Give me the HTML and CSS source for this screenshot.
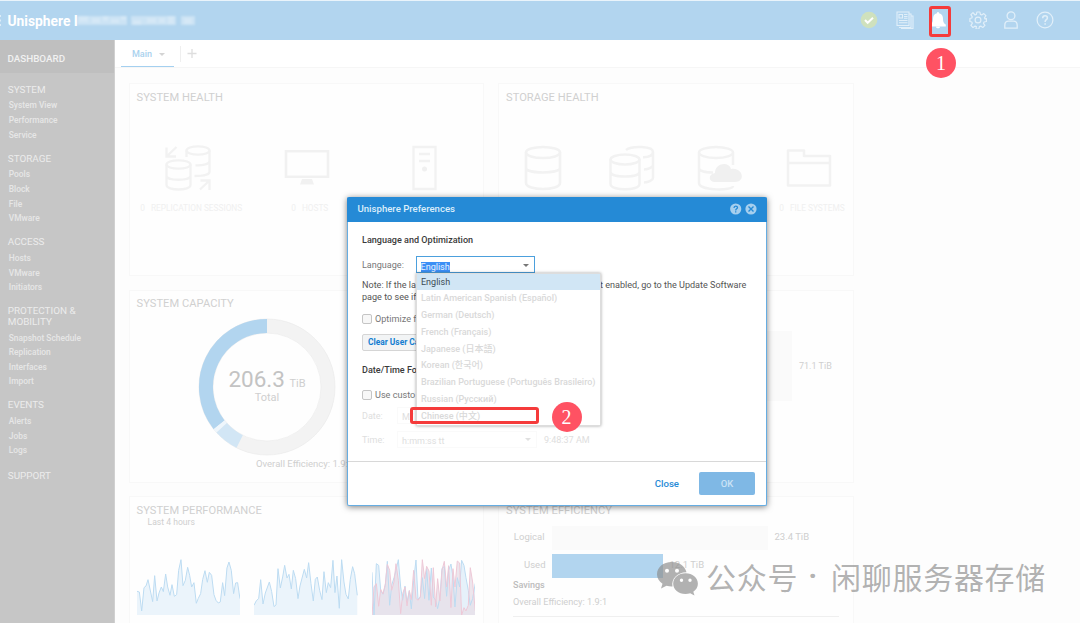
FILE: index.html
```html
<!DOCTYPE html>
<html lang="en">
<head>
<meta charset="utf-8">
<title>Unisphere</title>
<link rel="stylesheet" href="styles.css">
</head>
<body>
<div class="app">
  <header class="topbar">
    <svg class="grip" width="2" height="14" viewBox="0 0 2 14"><path d="M0 2h1M0 6.500h1M0 11h1" stroke="#dcecf8" stroke-width="2"/></svg>
    <h1 class="brand">Unisphere I</h1>
    <svg class="masked" width="118" height="12" viewBox="0 0 118 12" fill="#fff">
      <g opacity=".33"><rect x="0" y="1" width="50" height="9"/><rect x="54" y="1" width="45" height="9"/><rect x="104" y="1" width="14" height="9"/></g>
      <g opacity=".18"><rect x="2" y="1" width="9" height="6"/><rect x="15" y="3" width="8" height="5"/><rect x="26" y="1" width="5" height="5"/><rect x="34" y="4" width="8" height="4"/><rect x="44" y="1" width="5" height="4"/><rect x="56" y="5" width="8" height="5"/><rect x="70" y="3" width="9" height="5"/><rect x="82" y="3" width="6" height="5"/><rect x="91" y="1" width="6" height="8"/><rect x="107" y="3" width="8" height="6"/></g>
    </svg>
    <nav class="tools">
      <svg width="18" height="18" viewBox="0 0 18 18"><circle cx="9" cy="9" r="8.300" fill="#cfe1bd"/><path d="M5 9l2.700 2.800L13 6.800" fill="none" stroke="#fff" stroke-width="2"/></svg>
      <svg width="18" height="18" viewBox="0 0 18 18" fill="none" stroke="#e1eff9" stroke-width="1.100"><path d="M1 1h12v13.500H1zM13 3h2v13.500H3M15 5h2v12.500H5"/><path d="M3 3.500h3.500v3.500H3zM8 3.500h3.500M8 5.500h3.500M8 7.300h3.500M3 9.500h8.500M3 11.700h8.500"/></svg>
      <svg width="18" height="18" viewBox="0 0 18 18" fill="#fff"><path d="M8 2.200C8 .5 10 .5 10 2.200c3 .6 4 3 4 5.500 0 3.500 1 4.800 2.800 5.800v2H1.200v-2C3 12.500 4 11.200 4 7.700c0-2.500 1-4.900 4-5.500zM7 15.800h4c0 2-4 2-4 0z"/></svg>
      <svg width="18" height="18" viewBox="0 0 18 18" fill="none" stroke="#e1eff9" stroke-width="1.200"><path stroke-linejoin="round" d="M7.500 1h3l.5 2.400 1.300.6 2.100-1.400 2.100 2.100-1.400 2.100.5 1.200L17 7.500v3l-2.400.5-.5 1.300 1.400 2.100-2.100 2.100-2.100-1.400-1.300.5-.5 2.400h-3L7 15.600l-1.300-.5-2.100 1.400-2.100-2.100 1.400-2.100-.5-1.300-1.900-.5v-3L2.400 7l.5-1.200-1.400-2.100 2.100-2.100L5.700 4 7 3.400z" transform="translate(.4 0)"/><circle cx="9" cy="9" r="2.900"/></svg>
      <svg width="18" height="18" viewBox="0 0 18 18" fill="none" stroke="#e1eff9" stroke-width="1.300"><circle cx="9" cy="4.800" r="3.900"/><path d="M2.800 17.200v-3c0-2.500 1.500-4 3.800-4h4.800c2.300 0 3.800 1.500 3.800 4v3z"/></svg>
      <svg width="18" height="18" viewBox="0 0 18 18" fill="none" stroke="#e1eff9"><circle cx="9" cy="9" r="7.900" stroke-width="1.200"/><path d="M6.700 7.200c0-3.300 4.700-3 4.700-.3 0 1.900-2.300 1.700-2.300 4M9.100 12.200v1.600" stroke-width="1.500"/></svg>
    </nav>
  </header>

  <div class="columns">
    <aside class="sidebar">
      <div class="dash">DASHBOARD</div>
      <section><h2>SYSTEM</h2><p>System View</p><p>Performance</p><p>Service</p></section>
      <section><h2>STORAGE</h2><p>Pools</p><p>Block</p><p>File</p><p>VMware</p></section>
      <section><h2>ACCESS</h2><p>Hosts</p><p>VMware</p><p>Initiators</p></section>
      <section><h2>PROTECTION &amp;<br>MOBILITY</h2><p>Snapshot Schedule</p><p>Replication</p><p>Interfaces</p><p>Import</p></section>
      <section><h2>EVENTS</h2><p>Alerts</p><p>Jobs</p><p>Logs</p></section>
      <section class="support"><h2>SUPPORT</h2></section>
    </aside>

    <main class="main">
      <div class="tabs">
        <div class="tab">Main<i class="caret"></i></div>
        <svg class="plus" width="18" height="18" viewBox="0 0 18 18"><path d="M.5 1v16" stroke="#efefef"/><path d="M7.500 8.500h9M12 4v9" stroke="#dedede" stroke-width="1.300"/></svg>
      </div>
      <div class="grid">
        <article class="card">
          <h3>SYSTEM HEALTH</h3>
          <div class="tiles three">
            <div class="tile">
              <svg width="46" height="46" viewBox="0 0 46 46" fill="none" stroke="#f2f2f2" stroke-width="2.300"><path d="M11.500 2L2 11M1.500 2.500v9H11"/><path d="M35 44.500L44 36M35.500 35.500h9V45"/><ellipse cx="33" cy="5.500" rx="11.500" ry="4.200"/><path d="M21.500 5.500V12M44.500 5.500V27c0 2-5 4-15 4M44.500 16c0 3-6 4.500-14 4.300"/><ellipse cx="13.500" cy="19.500" rx="12" ry="4.200"/><path d="M1.500 19.500V40c0 6 24 6 24 0V19.500M1.500 31c0 5 24 5 24 0"/></svg>
              <span><b>0</b>REPLICATION SESSIONS</span>
            </div>
            <div class="tile">
              <svg width="46" height="46" viewBox="0 0 46 46"><path d="M2 6.300h42v25.500H2z" fill="none" stroke="#f1f1f1" stroke-width="2.600"/><path d="M18 34h10l2 5.500H16z" fill="#f1f1f1"/></svg>
              <span><b>0</b>HOSTS</span>
            </div>
            <div class="tile">
              <svg width="46" height="46" viewBox="0 0 46 46" fill="none" stroke="#f2f2f2" stroke-width="2.300"><path d="M11.500 2h22v42h-22zM17 9h11M17 16h11"/><circle cx="22.500" cy="24" r="2.500" fill="#f0f0f0" stroke="none"/></svg>
            </div>
          </div>
        </article>

        <article class="card">
          <h3>STORAGE HEALTH</h3>
          <div class="tiles four">
            <div class="tile"><svg width="46" height="46" viewBox="0 0 46 46" fill="none" stroke="#f2f2f2" stroke-width="2.600"><ellipse cx="23" cy="7.500" rx="17" ry="5.500"/><path d="M6 7.500V38c0 8 34 8 34 0V7.500M6 23c0 6 34 6 34 0"/></svg></div>
            <div class="tile"><svg width="46" height="46" viewBox="0 0 46 46" fill="none" stroke="#f2f2f2" stroke-width="2.500"><ellipse cx="16" cy="14.500" rx="14.500" ry="5"/><path d="M1.500 14.500V39c0 7 29 7 29 0V14.500M1.500 27c0 6 29 6 29 0M17 5C23 .5 44 1 44 7c0 3-4 5-10 5.300M44 7v26c0 2-4 4-9 4.500M44 20c0 2-4 4-9 4.500"/></svg></div>
            <div class="tile"><svg width="46" height="46" viewBox="0 0 46 46" fill="none" stroke="#f2f2f2" stroke-width="2.500"><ellipse cx="19" cy="7.500" rx="17" ry="5.500"/><path d="M2 7.500V38c0 8 34 8 34 3M36 7.500V20M2 23c0 3 7 4.500 14 4.500"/><path d="M18 37c-7 0-7-8 0-9 0-10 14-12 16-4 12-2 15 13 4 13z" fill="#f0f0f0" stroke="none"/></svg></div>
            <div class="tile"><svg width="46" height="46" viewBox="0 0 46 46" fill="none" stroke="#f2f2f2" stroke-width="2.500" stroke-linejoin="round"><path d="M2 5.500h16V11h26v29.500H2zM2 18h42"/></svg><span><b>0</b>FILE SYSTEMS</span></div>
          </div>
        </article>

        <article class="card">
          <h3>SYSTEM CAPACITY</h3>
          <div class="donut">
            <svg width="138" height="138" viewBox="-69 -69 138 138" fill="none" stroke-width="14"><circle r="61" stroke="#f3f3f3"/><circle r="68" stroke="#e9e9e9" stroke-width=".6"/><circle r="54" stroke="#e9e9e9" stroke-width=".6"/><path d="M0-61A61 61 0 0 0-47.900 37.800" stroke="#b2d5ef"/><path d="M-47.900 37.800A61 61 0 0 0-45.300 40.800" stroke="#eef6fc"/><path d="M-45.300 40.800A61 61 0 0 0-27.300 54.500" stroke="#d2e6f5"/></svg>
            <div class="total"><div><strong>206.3</strong> TiB</div><em>Total</em></div>
          </div>
          <p class="eff">Overall Efficiency: 1.9:1</p>
        </article>

        <article class="card">
          <div class="pool"><i></i><span>71.1 TiB</span></div>
        </article>

        <article class="card">
          <h3>SYSTEM PERFORMANCE</h3>
          <p class="period">Last 4 hours</p>
          <div class="charts">
            <svg width="103.300" height="58.300" viewBox="50 470 310 175"><polygon fill="#ebf4fb" points="50,645 50,573 57,575 64,632 71,562 77,557 83,538 97,604 103,526 110,602 116,578 123,560 129,574 136,521 142,560 149,585 155,553 162,588 169,583 175,510 182,478 188,556 195,540 202,501 208,525 214,560 221,547 228,609 234,594 241,580 247,538 254,511 261,546 267,516 274,525 281,583 287,600 294,608 300,605 307,547 313,586 320,503 326,485 333,510 340,580 346,548 352,547 359,595 359,645"/><polyline class="blue" points="50,573 57,575 64,632 71,562 77,557 83,538 97,604 103,526 110,602 116,578 123,560 129,574 136,521 142,560 149,585 155,553 162,588 169,583 175,510 182,478 188,556 195,540 202,501 208,525 214,560 221,547 228,609 234,594 241,580 247,538 254,511 261,546 267,516 274,525 281,583 287,600 294,608 300,605 307,547 313,586 320,503 326,485 333,510 340,580 346,548 352,547 359,595"/></svg>
            <svg width="103.300" height="58.300" viewBox="403 470 310 175"><polygon fill="#ebf4fb" points="403,645 403,615 410,601 417,595 423,538 430,611 437,578 449,545 456,574 463,619 469,614 475,505 482,563 489,530 495,495 502,533 508,522 515,566 521,510 528,535 535,595 541,557 554,507 561,533 567,487 574,550 581,602 587,537 593,530 600,570 607,598 613,514 620,577 626,547 633,562 640,480 646,577 652,527 659,624 666,478 673,545 679,582 686,596 692,537 699,499 705,520 713,585 713,645"/><polyline class="blue" points="403,615 410,601 417,595 423,538 430,611 437,578 449,545 456,574 463,619 469,614 475,505 482,563 489,530 495,495 502,533 508,522 515,566 521,510 528,535 535,595 541,557 554,507 561,533 567,487 574,550 581,602 587,537 593,530 600,570 607,598 613,514 620,577 626,547 633,562 640,480 646,577 652,527 659,624 666,478 673,545 679,582 686,596 692,537 699,499 705,520 713,585"/></svg>
            <svg width="103.300" height="58.300" viewBox="100 200 310 175"><polygon fill="#e6f1fa" points="100,375 100,246 106,375 113,220 120,225 126,300 133,312 140,285 146,213 153,345 159,285 166,262 172,240 179,208 186,290 192,330 199,287 205,335 212,301 218,356 225,270 232,209 238,327 245,320 251,262 258,325 264,235 271,330 278,233 284,320 291,330 297,355 304,320 310,235 317,228 324,318 330,240 337,221 343,260 349,350 356,262 363,290 369,210 376,225 382,262 389,300 395,345 402,325 410,279 410,375"/><polygon fill="#e7dde7" fill-opacity=".75" points="100,375 106,290 113,280 120,348 126,297 133,311 140,280 146,222 153,240 159,300 166,275 172,220 179,270 186,370 192,310 199,290 205,347 212,301 218,328 225,240 232,324 238,330 245,320 251,208 258,265 264,228 271,242 278,345 284,232 291,350 297,265 304,332 310,240 317,213 324,290 330,226 337,352 343,235 349,290 356,212 363,218 369,375 376,352 382,362 389,345 395,232 402,275 410,362 410,375"/><polyline class="blue" points="100,246 106,375 113,220 120,225 126,300 133,312 140,285 146,213 153,345 159,285 166,262 172,240 179,208 186,290 192,330 199,287 205,335 212,301 218,356 225,270 232,209 238,327 245,320 251,262 258,325 264,235 271,330 278,233 284,320 291,330 297,355 304,320 310,235 317,228 324,318 330,240 337,221 343,260 349,350 356,262 363,290 369,210 376,225 382,262 389,300 395,345 402,325 410,279"/><polyline class="pink" points="100,375 106,290 113,280 120,348 126,297 133,311 140,280 146,222 153,240 159,300 166,275 172,220 179,270 186,370 192,310 199,290 205,347 212,301 218,328 225,240 232,324 238,330 245,320 251,208 258,265 264,228 271,242 278,345 284,232 291,350 297,265 304,332 310,240 317,213 324,290 330,226 337,352 343,235 349,290 356,212 363,218 369,375 376,352 382,362 389,345 395,232 402,275 410,362"/></svg>
          </div>
        </article>

        <article class="card">
          <h3>SYSTEM EFFICIENCY</h3>
          <div class="bars">
            <div class="bar"><label>Logical</label><i class="logical"></i><span>23.4 TiB</span></div>
            <div class="bar used"><label>Used</label><i class="usedbar"></i><span>12.1 TiB</span></div>
          </div>
          <p class="savings">Savings</p>
          <p class="ratio">Overall Efficiency: 1.9:1</p>
        </article>
      </div>
    </main>
  </div>

  <div class="dialog">
    <div class="dialog-head"><span>Unisphere Preferences</span>
      <svg width="27" height="12" viewBox="0 0 27 12"><circle cx="5.700" cy="6" r="5.600" fill="#a6cfee"/><path d="M4 4.900c0-2.500 3.500-2.300 3.500-.3 0 1.300-1.800 1.200-1.800 2.800M5.700 8.200v1.300" fill="none" stroke="#258ad6" stroke-width="1.300"/><circle cx="21" cy="6" r="5.600" fill="#a6cfee"/><path d="M18.500 3.500l5 5M23.500 3.500l-5 5" stroke="#258ad6" stroke-width="1.400"/></svg>
    </div>
    <div class="dialog-body">
      <h4>Language and Optimization</h4>
      <div class="lang"><label>Language:</label>
        <div class="combo"><mark>English</mark><i class="caret dark"></i>
          <ul class="menu">
            <li class="on">English</li><li>Latin American Spanish (Español)</li><li>German (Deutsch)</li><li>French (Français)</li><li>Japanese (日本語)</li><li>Korean (한국어)</li><li>Brazilian Portuguese (Português Brasileiro)</li><li>Russian (Русский)</li><li>Chinese (中文)</li>
          </ul>
        </div>
      </div>
      <div class="note"><p><span class="lead">Note: If the la</span><span>t enabled, go to the Update Software</span></p><p>page to see if</p></div>
      <div class="check opt"><i></i>Optimize f</div>
      <button class="clear">Clear User Ca</button>
      <h4 class="dt">Date/Time Fo</h4>
      <div class="check"><i></i>Use custo</div>
      <div class="field date"><label>Date:</label><div>M/<i class="caret"></i></div></div>
      <div class="field"><label>Time:</label><div>h:mm:ss tt<i class="caret"></i></div><span>9:48:37 AM</span></div>
    </div>
    <div class="dialog-foot"><a>Close</a><button>OK</button></div>
  </div>

  <div class="frame frame-bell"></div>
  <div class="pin pin-one">1</div>
  <div class="frame frame-chinese"></div>
  <div class="pin pin-two">2</div>

  <div class="watermark">
    <svg width="43" height="36" viewBox="0 0 43 36"><path fill="#8c8c8c" fill-opacity=".68" fill-rule="evenodd" d="M16 1C7 1 1 6.500 1 13.300c0 3.800 2 7.200 5.500 9.500L5 27.500l5.500-2.800c2 .6 4 .9 6 .8-1.600-8 5.500-14.500 14-14.300C29 5 23 1 16 1zM11 7.700a2 2 0 1 1 0 4 2 2 0 0 1 0-4zm10 0a2 2 0 1 1 0 4 2 2 0 0 1 0-4z"/><path fill="#8c8c8c" fill-opacity=".68" fill-rule="evenodd" d="M29.500 12.300c-7 0-12.300 4.700-12.300 10.400S22.500 33 29.500 33c1.600 0 3.200-.3 4.700-.8l4.300 2.400-1.200-3.900c3-2 4.600-4.800 4.600-8 0-5.700-5.400-10.400-12.400-10.400zM25.500 17.500a1.700 1.700 0 1 1 0 3.400 1.700 1.700 0 0 1 0-3.400zm8.500 0a1.700 1.700 0 1 1 0 3.400 1.700 1.700 0 0 1 0-3.400z"/></svg>
    <span>公众号</span><b>·</b><span>闲聊服务器存储</span>
  </div>
</div>
</body>
</html>
```
FILE: styles.css
```css
* { box-sizing: border-box; margin: 0; padding: 0; }
body { width: 1080px; height: 623px; overflow: hidden; background: #fdfdfd; font-family: Roboto, "Noto Sans CJK SC", sans-serif; font-size: 9px; color: #777; }
svg { display: block; flex: none; }
ul { list-style: none; }
i, em { font-style: normal; }
h1, h2, h3 { font-weight: 400; }
button { font-family: inherit; }
.app { position: relative; height: 623px; overflow: hidden; }

.topbar { height: 40px; display: flex; align-items: center; background: #b2d5ef; border-top: 1px solid #eaf4fb; color: #fff; }
.grip { margin-right: 5.500px; }
.brand { font-size: 13.800px; font-weight: 700; white-space: nowrap; width: 69px; line-height: 16px; }
.masked { filter: blur(1px); }
.tools { margin-left: auto; padding-right: 26px; display: flex; margin-top: -1px; }
.tools svg { margin-left: 16px; }
.tools svg:nth-child(2) { margin-left: 18px; }
.tools svg:nth-child(3) { margin-left: 15px; }
.tools svg:nth-child(4) { margin-left: 21.500px; }
.tools svg:nth-child(5) { margin-left: 15.500px; }

.columns { display: flex; height: 583px; }
.sidebar { width: 115px; background: #c6c6c6; border-right: 1px solid #d0d0d0; color: #ececec; flex: none; }
.dash { height: 33px; line-height: 37px; padding-left: 7.500px; background: #bfbfbf; color: #f1f1f1; font-size: 9.800px; font-weight: 500; margin-bottom: 11.700px; }
.sidebar section { padding-left: 7.800px; margin-bottom: 11.550px; }
.sidebar h2 { font-size: 9.900px; line-height: 10.500px; margin-bottom: 3.200px; }
.sidebar p { font-size: 8.400px; line-height: 14.600px; padding-left: 1px; font-weight: 500; color: #e6e6e6; }
.sidebar .support { padding-top: 1.200px; }

.main { flex: 1; min-width: 0; }
.tabs { height: 28px; display: flex; background: #fff; border-bottom: 1px solid #f6f6f6; padding-left: 6px; }
.tab { width: 53px; height: 27px; display: flex; align-items: center; padding: 2px 9px 0 11px; justify-content: space-between; border-bottom: 1px solid #a4d0f0; color: #a9d1ee; font-size: 9px; font-weight: 500; }
.plus { margin: 5px 0 0 6px; }
.caret { width: 0; border: 3px solid transparent; border-top-color: #d4d4d4; border-bottom: 0; flex: none; }
.caret.dark { border-top-color: #777; }

.grid { padding: 15px 0 0 13.500px; display: grid; grid-template-columns: 355.500px 356px; grid-auto-rows: 193px; gap: 13.500px 14px; }
.card { background: #fefefe; border: 1px solid #f8f8f8; padding: 7px; color: #cfcfcf; }
.card:nth-child(n+3) { padding-top: 6px; }
.card:nth-child(n+5) { padding-top: 6.500px; }
.card h3 { font-size: 11.120px; line-height: 13px; letter-spacing: .05px; color: #d0d0d0; white-space: nowrap; }
.tiles { margin-top: 41px; display: grid; }
.three { grid-template-columns: repeat(3, 118.500px); margin-left: -7.500px; }
.four { grid-template-columns: repeat(4, 88.700px); margin-left: -7.500px; }
.tile { display: flex; flex-direction: column; align-items: center; gap: 12px; font-size: 8.300px; line-height: 10px; color: #f0f0f0; white-space: nowrap; }
.tile span { padding-left: 6px; }
.tile b { font-weight: 400; margin-right: 6px; }
.donut { margin: 8px 0 0 61.500px; width: 138px; position: relative; }
.total { position: absolute; inset: 0; display: flex; flex-direction: column; align-items: center; justify-content: center; font-size: 11px; padding-bottom: 2px; }
.total strong { font-size: 22.500px; line-height: 23px; font-weight: 400; color: #c3c3c3; margin-right: 2px; }
.total em { line-height: 12px; margin-top: 1px; }
.eff { margin-left: 119.500px; font-size: 9.500px; line-height: 16px; }
.pool { display: flex; align-items: center; margin-top: 34px; gap: 7.500px; }
.pool i { width: 285.500px; height: 70px; background: #fafafa; }
.period { font-size: 8.600px; line-height: 10px; padding-left: 11px; }
.charts { display: flex; gap: 14.500px; margin-top: 30.500px; }
.blue, .pink { fill: none; stroke: #bddcf2; stroke-width: 3; }
.pink { stroke: #eec9d7; }
.bars { margin-top: 9px; display: grid; gap: 4px; }
.bar { display: flex; align-items: center; height: 24px; gap: 7px; font-size: 9.500px; line-height: 12px; }
.bar label, .bar span { margin-bottom: 1.500px; }
.bar label { width: 38.500px; text-align: right; }
.used label { width: 39.500px; margin-right: -1px; }
.bar i { height: 24px; }
.logical { width: 216px; background: #fafafa; }
.usedbar { width: 111px; background: #b2d5ef; }
.savings { font-weight: 500; color: #bcbcbc; line-height: 12px; padding-left: 7px; margin-top: 1px; }
.ratio { font-size: 9.200px; line-height: 12px; padding-bottom: 8px; margin: 5.500px 7px 0 7px; border-bottom: 1px solid #efefef; }

.dialog { position: absolute; left: 347px; top: 196.500px; width: 420px; height: 309px; background: #fff; border: 1px solid #66ade2; border-top: 0; border-radius: 2px; box-shadow: 0 1px 6px rgba(0,0,0,.5); display: flex; flex-direction: column; color: #777; }
.dialog-head { height: 25.500px; background: #258ad6; margin: 0 -1px; border-radius: 2px 2px 0 0; display: flex; align-items: center; justify-content: space-between; padding: 0 10px 0 10.500px; color: #dceefb; font-weight: 500; font-size: 9.600px; flex: none; }
.dialog-head span { margin-bottom: 1px; }
.dialog-body { height: 240px; padding: 12px 0 0 14px; border-bottom: 1px solid #d8d8d8; }
.dialog-body h4 { font-size: 9.050px; line-height: 12px; font-weight: 500; color: #3a3a3a; }
.lang { display: flex; align-items: center; margin-top: 10px; height: 17px; font-size: 9.050px; }
.lang label { width: 53.500px; }
.combo { position: relative; width: 119px; height: 17px; border: 1px solid #4ca0dd; display: flex; align-items: center; justify-content: space-between; padding: 4px 5px 0 4px; }
.combo mark { background: #3b8ff5; color: #e9f3ff; line-height: 10px; }
.combo .caret { margin-bottom: 3px; }
.menu { position: absolute; z-index: 1; left: -1px; top: 15.500px; width: 185px; height: 153.500px; background: #fff; border: 1px solid #ddd; box-shadow: 0 0 3px rgba(0,0,0,.35); font-size: 9.020px; font-weight: 500; color: #d9d9d9; white-space: nowrap; }
.menu li { height: 16.800px; line-height: 16px; padding-left: 4.500px; }
.menu .on { background: #d1e6f5; color: #3d4b55; font-weight: 400; }
.note { margin-top: 6px; font-size: 9.070px; line-height: 12px; color: #555; }
.note p { display: flex; }
.lead { width: 238px; }
.check { display: flex; align-items: center; gap: 3px; height: 12px; font-size: 9.100px; }
.check i { width: 10px; height: 10px; border: 1px solid #c5c5c5; border-radius: 2px; background: #f7f7f7; }
.opt { margin-top: 9.500px; }
.clear { display: block; margin-top: 9px; width: 90px; height: 17px; padding: 0 5px; border: 1px solid #d5d5d5; border-radius: 2px; background: #f2f4f5; color: #137ed1; font-size: 8.400px; font-weight: 700; text-align: left; white-space: nowrap; }
.dialog-body .dt { margin: 13.500px 0 13px; }
.field { display: flex; align-items: center; height: 17px; margin-top: 7px; color: #dedede; font-size: 9px; }
.date { margin-top: 6px; }
.field label { width: 35px; }
.field div { width: 140px; height: 17px; border: 1px solid #fafafa; display: flex; align-items: center; justify-content: space-between; padding: 2px 5px 0 4px; margin-right: 7px; }
.field .caret { border-top-color: #e0e0e0; margin-bottom: 3px; }
.dialog-foot { flex: 1; display: flex; align-items: center; justify-content: flex-end; padding-right: 11px; gap: 20px; font-size: 9.600px; font-weight: 500; color: #258ad6; }
.dialog-foot button { width: 56px; height: 23px; border: 0; border-radius: 2px; background: #7fb8e5; color: #cbe2f5; font-size: 9.500px; font-weight: 500; }

.frame { position: absolute; z-index: 2; border: 3px solid #f53b3b; border-radius: 3px; }
.frame-bell { left: 929px; top: 6px; width: 22px; height: 31px; }
.frame-chinese { left: 410px; top: 407px; width: 129px; height: 16.500px; }
.pin { position: absolute; z-index: 2; width: 30px; height: 30px; border-radius: 50%; background: #ff5263; color: #fff; font: 20px/30px "Liberation Serif", serif; text-align: center; }
.pin-one { left: 926px; top: 48px; }
.pin-two { left: 551.500px; top: 402px; }
.watermark { position: absolute; left: 656px; top: 561px; display: flex; color: rgba(140,140,140,.68); font: 30px/36px "Noto Sans CJK SC", sans-serif; white-space: nowrap; letter-spacing: .7px; }
.watermark span, .watermark b { margin-top: -3px; }
.watermark span:nth-of-type(1) { margin-left: 7px; }
.watermark b { width: 33px; padding-right: 3px; text-align: center; font-family: Roboto, sans-serif; font-weight: 700; }
```
